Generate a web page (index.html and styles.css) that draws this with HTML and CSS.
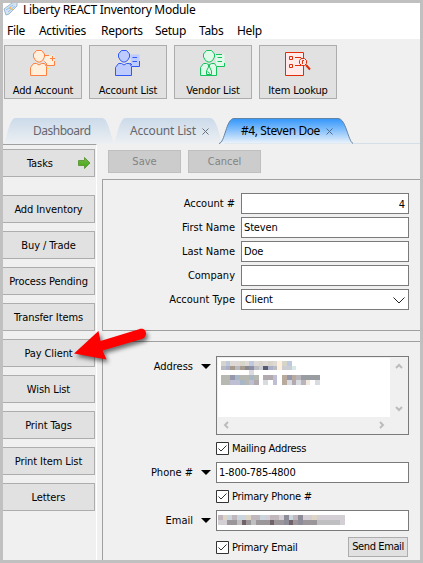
FILE: index.html
```html
<!DOCTYPE html>
<html lang="en">
<head>
<meta charset="utf-8">
<title>Liberty REACT Inventory Module</title>
<link rel="stylesheet" href="styles.css">
</head>
<body>
<div class="window">
  <header class="titlebar">
    <svg class="app-icon" width="15" height="14" viewBox="0 0 15 14"><path d="M1 7L9 1L14 0L14 4L6 12L3 13Z" fill="#d5e4f2" stroke="#9eb6cf"/><path d="M3 8L10 3M5 10L12 4" stroke="#8fbfe8"/><path d="M6 5h2v2h-2zM8 7h2v1h-2z" fill="#f4bd62"/></svg>
    <span class="title">Liberty REACT Inventory Module</span>
  </header>
  <nav class="menu"><span class="m-file">File</span><span class="m-act">Activities</span><span class="m-rep">Reports</span><span class="m-set">Setup</span><span class="m-tabs">Tabs</span><span class="m-help">Help</span></nav>
  <div class="toolbar">
    <button class="tool">
      <svg width="28" height="28" viewBox="0 0 28 28" fill="#fff0dd" stroke="#ff8040"><path d="M1.5 26.5V18.5L4.5 14.5H7.5L10 16L12.5 14.5H15.5L17.5 17.5V26.5Z"/><path d="M7.5 1.5H12.5L15.5 5V8L13.5 11.5L11 13H9L6.5 11.5L4.5 8V5Z"/><path d="M16 6.5H25.5V16.5H17.5V14.5L15.5 12.5" stroke="none"/><path d="M16 6.500H20M25.500 12V16.500H17.500V14.500L15.500 12.500" fill="none"/><path d="M23.500 7V12M21 9.500H26"/><path d="M19 19.5h1" stroke="#ffff30"/></svg>
      <span>Add Account</span>
    </button>
    <button class="tool">
      <svg width="28" height="28" viewBox="0 0 28 28" fill="#becbff" stroke="#3357f5"><path d="M16 5.5H25.5V17.5H17.5" stroke="none"/><path d="M1.5 26.5V18.5L4.5 14.5H7.5L10 16L12.5 14.5H15.5L17.5 17.5V26.5Z"/><path d="M7.5 1.5H12.5L15.5 5V8L13.5 11.5L11 13H9L6.5 11.5L4.5 8V5Z"/><path d="M18 17.5H25.5V12M18.500 8.500H23M18.500 12.500H23M16 14L18 16" fill="none"/></svg>
      <span>Account List</span>
    </button>
    <button class="tool">
      <svg width="28" height="28" viewBox="0 0 28 28" fill="#e0fae9" stroke="#13c45b"><path d="M16 5.500H25.500V17.500H17.500" stroke="none"/><path d="M1.500 26.500V18.500L4.500 14.500H7.500L10 16L12.500 14.500H15.500L17.500 17.500V26.500Z"/><path d="M7.500 1.500H12.500L15.500 5V8L13.500 11.500L11 13H9L6.500 11.500L4.500 8V5Z"/><path d="M18 17.500H25.500V14M17 5.500H23M18.500 8.500H23M18.500 12.500H23M9.500 16V18L7.500 22V25.500H12.500V22L10.500 18V16M8.500 22.500L11 24.500" fill="none"/></svg>
      <span>Vendor List</span>
    </button>
    <button class="tool">
      <svg width="28" height="28" viewBox="0 0 28 28" fill="#ffe9e9" stroke="#df2d09"><path d="M1.500 3.500H19.500V26.500H1.500Z"/><path d="M5.500 7.500h3v3h-3zM5.500 15.500h3v3h-3zM11 8.500h6M11 16.500h6"/><path d="M17 9.500H20.500L22.500 11.500V14.500L20.500 16.500H17.500L15.500 14.500V11.500Z"/><path d="M18.500 15V11.500H20" fill="none"/><path d="M22 16L26 20.500" stroke-width="2"/></svg>
      <span>Item Lookup</span>
    </button>
  </div>
  <div class="tabs">
    <div class="tab dash"><svg class="tab-shape" width="112" height="26" viewBox="0 0 112 26"><defs><linearGradient id="pale" x2="0" y2="1"><stop stop-color="#cbdaea"/><stop offset=".5" stop-color="#dce5ee"/><stop offset="1" stop-color="#edf0f3"/></linearGradient></defs><path d="M0 26C4 24 5 2 12 0H99C106 0 108 22 112 26Z" fill="url(#pale)"/></svg><span class="s-dash">Dashboard</span></div>
    <div class="tab list"><svg class="tab-shape" width="112" height="26" viewBox="0 0 112 26"><path d="M0 26C4 24 5 2 12 0H97C105 0 106 23 112 26Z" fill="url(#pale)"/></svg><span class="s-list">Account List</span><svg class="close" width="7" height="7"><path d="M.5 .5L6.500 6.500M6.500 .5L.5 6.500" stroke="#67717a"/></svg></div>
    <div class="tab active"><svg class="tab-shape" width="136" height="26" viewBox="0 0 136 26"><defs><linearGradient id="blue" x2="0" y2="1"><stop stop-color="#3296fb"/><stop offset=".45" stop-color="#82bffc"/><stop offset="1" stop-color="#edf3fa"/></linearGradient></defs><path d="M0 25.500C6 25 7 .5 15 .5H119C127 .5 129 23 134 25.500" fill="url(#blue)" stroke="#6284a4"/></svg><span class="s-act">#4, Steven Doe</span><svg class="close" width="7" height="7"><path d="M.5 .5L6.500 6.500M6.500 .5L.5 6.500" stroke="#4e6d8c"/></svg></div>
  </div>
  <div class="body">
    <aside class="side">
      <button class="task head"><span>Tasks</span><svg class="go" width="13" height="12" viewBox="0 0 13 12"><defs><linearGradient id="green" x2="0" y2="1"><stop stop-color="#77b84c"/><stop offset="1" stop-color="#3fa80b"/></linearGradient></defs><path d="M.5 3.500H6.500V.5L12 6L6.500 11.500V8.500H.5Z" fill="url(#green)" stroke="#619b3d"/></svg></button>
      <button class="task"><span>Add Inventory</span></button>
      <button class="task"><span>Buy / Trade</span></button>
      <button class="task"><span>Process Pending</span></button>
      <button class="task"><span>Transfer Items</span></button>
      <button class="task"><span>Pay Client</span></button>
      <button class="task"><span>Wish List</span></button>
      <button class="task"><span>Print Tags</span></button>
      <button class="task"><span>Print Item List</span></button>
      <button class="task"><span>Letters</span></button>
    </aside>
    <main class="main">
      <div class="actions"><button class="disabled">Save</button><button class="disabled">Cancel</button></div>
      <section class="group account">
        <label class="row"><span class="label">Account #</span><span class="field number">4</span></label>
        <label class="row"><span class="label">First Name</span><span class="field">Steven</span></label>
        <label class="row"><span class="label">Last Name</span><span class="field">Doe</span></label>
        <label class="row"><span class="label">Company</span><span class="field"></span></label>
        <label class="row"><span class="label">Account Type</span><span class="field select">Client<svg width="12" height="7"><path d="M.5 .5L6 6L11.500 .5" fill="none" stroke="#222"/></svg></span></label>
      </section>
      <section class="group contact">
        <div class="crow top"><span class="label">Address</span><i class="drop"></i>
          <div class="area">
            <div class="redacted"><svg width="100" height="24" viewBox="0 0 100 24" shape-rendering="crispEdges"><g transform="scale(4.700)">
              <path fill="#d7d4ca" d="M0 0h1v1h-1zM4 0h1v1h-1zM8 0h1v1h-1zM10 0h1v1h-1zM13 0h1v1h-1z"/><path fill="#bec8df" d="M1 0h1v1h-1zM6 0h1v1h-1zM14 0h1v1h-1z"/><path fill="#ded9d5" d="M2 0h2v1h-2zM5 0h1v1h-1zM7 0h1v1h-1zM9 0h1v1h-1zM11 0h2v1h-2z"/>
              <path fill="#b9bbc0" d="M0 1h1v1h-1zM3 1h1v1h-1zM7 1h1v1h-1zM11 1h1v1h-1z"/><path fill="#aab0ca" d="M1 1h1v1h-1zM10 1h1v1h-1z"/><path fill="#a69b8e" d="M2 1h1v1h-1zM4 1h1v1h-1z"/><path fill="#858b91" d="M5 1h1v1h-1z"/><path fill="#8d8da9" d="M6 1h1v1h-1z"/><path fill="#585a70" d="M9 1h1v1h-1z"/><path fill="#cccdd3" d="M8 1h1v1h-1zM13 1h2v1h-2z"/><path fill="#fff0dc" d="M12 0h1v2h-1z"/><path fill="#d7e8e9" d="M15 1h1v1h-1z"/><path fill="#dddae0" d="M6 2h1v1h-1z"/>
              <path fill="#b8b8b3" d="M0 3h2v2h-2zM4 3h2v2h-2zM7 3h1v1h-1z"/><path fill="#9696ad" d="M2 3h1v1h-1zM14 3h1v1h-1z"/><path fill="#a8b7c5" d="M3 3h1v1h-1zM4 4h1v1h-1zM6 3h1v1h-1z"/><path fill="#bebfd2" d="M2 4h2v1h-2zM6 4h1v1h-1zM11 3h1v2h-1z"/><path fill="#b2aaaf" d="M7 4h1v1h-1zM9 3h2v1h-2zM15 4h1v1h-1z"/><path fill="#d8dbe0" d="M9 4h1v1h-1zM14 4h1v1h-1zM16 4h1v1h-1zM20 4h1v1h-1z"/><path fill="#baa99d" d="M13 3h1v2h-1zM15 3h1v1h-1z"/><path fill="#999da1" d="M17 3h4v1h-4z"/><path fill="#b8b4bb" d="M16 3h1v1h-1zM17 4h1v1h-1z"/><path fill="#f3e9df" d="M18 4h1v1h-1z"/>
            </g></svg></div>
            <div class="vscroll"><svg width="8" height="6"><path d="M1 5L4 2L7 5" fill="none" stroke="#bcbcbc" stroke-width="2"/></svg><svg width="8" height="6"><path d="M1 1L4 4L7 1" fill="none" stroke="#bcbcbc" stroke-width="2"/></svg></div>
            <div class="hscroll"><svg width="6" height="8"><path d="M5 1L2 4L5 7" fill="none" stroke="#bcbcbc" stroke-width="2"/></svg><svg width="6" height="8"><path d="M1 1L4 4L1 7" fill="none" stroke="#bcbcbc" stroke-width="2"/></svg></div>
          </div>
        </div>
        <div class="check-row mailing"><svg class="check" width="13" height="13"><path d="M.5 .5h12v12h-12z" fill="#fff" stroke="#333"/><path d="M2.500 6.500L5 9L10.500 3.500" fill="none" stroke="#333"/></svg><span class="caption">Mailing Address</span></div>
        <div class="crow"><span class="label">Phone #</span><i class="drop"></i><span class="field phone">1-800-785-4800</span></div>
        <div class="check-row"><svg class="check" width="13" height="13"><path d="M.5 .5h12v12h-12z" fill="#fff" stroke="#333"/><path d="M2.500 6.500L5 9L10.500 3.500" fill="none" stroke="#333"/></svg><span class="caption">Primary Phone #</span></div>
        <div class="crow"><span class="label">Email</span><i class="drop"></i><span class="field email"><svg width="127" height="10" viewBox="0 0 27 2" preserveAspectRatio="none" shape-rendering="crispEdges"><path fill="#d3cfd4" d="M0 0h27v2h-27z"/><path fill="#c1b8bd" d="M0 0h1v1h-1zM3 0h1v1h-1zM7 0h2v1h-2zM11 0h2v1h-2zM16 0h2v1h-2z"/><path fill="#9b9699" d="M2 1h2v1h-2zM6 1h1v1h-1zM8 1h3v1h-3zM12 1h5v1h-5zM18 1h3v1h-3z"/><path fill="#716368" d="M5 1h1v1h-1zM11 1h1v1h-1zM15 1h1v1h-1z"/><path fill="#cbd5dd" d="M2 0h1v1h-1zM4 0h2v1h-2zM9 0h1v1h-1zM15 0h1v1h-1z"/><path fill="#ddd5c5" d="M1 0h1v1h-1zM6 0h1v1h-1zM20 0h1v1h-1z"/><path fill="#8f8c99" d="M14 0h1v2h-1zM17 0h1v2h-1z"/><path fill="#bfbec0" d="M4 1h1v1h-1zM7 1h1v1h-1zM21 1h5v1h-5z"/></svg></span></div>
        <div class="check-row last"><svg class="check" width="13" height="13"><path d="M.5 .5h12v12h-12z" fill="#fff" stroke="#333"/><path d="M2.500 6.500L5 9L10.500 3.500" fill="none" stroke="#333"/></svg><span class="caption">Primary Email</span><button class="send">Send Email</button></div>
      </section>
    </main>
  </div>
  <svg class="pointer" width="90" height="50" viewBox="70 320 90 50"><path d="M74 353.500L98.500 331L100.500 341L139 329.200C143.500 327.500 147 331 145.800 335C145 338 143 338.700 141 339.200L102.500 350.500L106.500 359.500Z" fill="#f00"/></svg>
</div>
</body>
</html>
```

FILE: styles.css
```css
* { box-sizing: border-box; }
body { margin: 0; font: 11px/14px "DejaVu Sans Condensed", "DejaVu Sans", sans-serif; font-stretch: condensed; color: #000; }
button { font: inherit; color: inherit; border-radius: 0; margin: 0; padding: 0; }
span { white-space: nowrap; }
svg { flex: none; display: block; }
.window { width: 423px; height: 563px; border: 3px solid #c0c0c0; background: #f0f0f0; overflow: hidden; position: relative; }
.titlebar { display: flex; height: 17px; background: #fff; font: 12px/15px "Noto Sans", sans-serif; letter-spacing: -.3px; }
.title { margin: -1px 0 0 5px; }
.app-icon { margin-top: -1px; }
.menu { display: flex; height: 19px; padding-left: 4px; background: #fff; font: 12px/21px "Noto Sans", sans-serif; letter-spacing: -.3px; }
.menu span { flex: none; }
.m-file { width: 32px; }
.m-act { width: 62px; }
.m-rep { width: 54px; }
.m-set { width: 44px; }
.m-tabs { width: 38px; }
.toolbar { display: flex; gap: 7px; padding: 6px 1px 0; height: 79px; }
.tool { width: 78px; height: 54px; display: flex; flex-direction: column; align-items: center; border: 1px solid #adadad; background: #e1e1e1; padding-top: 3px; }
.tool span { margin-top: 7px; letter-spacing: -.15px; }
.tabs { display: flex; height: 26px; border-bottom: 1px solid #d5dfe7; font: 12px/26px "Noto Sans", sans-serif; color: #66666d; }
.tab { position: relative; height: 26px; display: flex; align-items: center; flex: none; }
.tab-shape { position: absolute; left: 0; top: 0; }
.tab span, .close { position: relative; }
.dash { width: 110px; padding-left: 30px; }
.list { width: 106px; padding-left: 17px; }
.active { width: 136px; padding-left: 22px; color: #000; }
.s-dash { letter-spacing: -.5px; }
.s-list { letter-spacing: -.2px; }
.s-act { letter-spacing: -.4px; }
.close { margin-left: 6px; }
.body { display: flex; height: 416px; }
.side { width: 94px; border-top: 1px solid #a0a0a0; border-right: 1px solid #fff; padding-top: 4px; display: flex; flex-direction: column; gap: 8px; flex: none; }
.task { width: 92px; height: 28px; flex: none; border: 1px solid #adadad; border-left: 0; background: #e1e1e1; display: flex; justify-content: center; align-items: center; letter-spacing: -.1px; }
.task span { padding-top: 2px; }
.head { margin-bottom: 10px; justify-content: flex-start; padding-left: 24px; }
.go { margin-left: auto; margin-right: 3px; }
.main { flex: 1; padding: 6px 0 0 5px; min-width: 0; }
.actions { display: flex; gap: 7px; padding-left: 6px; height: 29px; }
.disabled { width: 73px; height: 23px; border: 1px solid #bfbfbf; background: #ccc; color: #838383; padding-top: 1px; }
.group { border: 1px solid #a0a0a0; border-right: 0; }
.account { height: 152px; padding: 13px 11px 0 0; display: flex; flex-direction: column; gap: 3px; }
.row { display: flex; justify-content: flex-end; align-items: center; height: 21px; flex: none; }
.label { margin-right: 6px; }
.field { width: 168px; height: 21px; background: #fff; border: 1px solid #7a7a7a; padding: 3px 2px 0; line-height: 13px; letter-spacing: -.15px; }
.number { text-align: right; padding-right: 3px; padding-top: 4px; }
.select { display: flex; justify-content: space-between; padding-left: 3px; padding-right: 3px; }
.select svg { margin-top: 4px; }
.contact { margin-top: 10px; height: 230px; padding: 14px 11px 0 0; }
.crow { display: flex; justify-content: flex-end; align-items: center; height: 21px; }
.crow .field { width: 193px; }
.crow .label { margin-right: 8px; padding-top: 1px; }
.drop { border: 5px solid transparent; border-top-color: #000; border-bottom: 0; margin-right: 5px; }
.top { height: 79px; align-items: flex-start; }
.top .label { margin-top: 3px; }
.top .drop { margin-top: 8px; }
.area { width: 193px; height: 79px; border: 1px solid #7a7a7a; background: #f0f0f0; padding: 1px; display: grid; grid-template-columns: 1fr 17px; grid-template-rows: 1fr 16px; }
.redacted { background: #fff; padding: 3px 0 0 3px; }
.vscroll { display: flex; flex-direction: column; justify-content: space-between; align-items: center; padding: 5px 0; }
.hscroll { display: flex; justify-content: space-between; align-items: center; padding: 0 5px; }
.check-row { display: flex; align-items: center; height: 13px; margin: 7px 0; padding-left: 113px; }
.check { margin-right: 3px; }
.caption { letter-spacing: -.25px; padding-top: 1px; }
.crow .phone { padding-left: 2px; letter-spacing: -.25px; }
.email { padding: 4px 0 0 1px; }
.last { height: 20px; margin: 6px 0 0; }
.send { width: 60px; height: 20px; border: 1px solid #adadad; background: #e1e1e1; margin-left: auto; margin-right: 1px; letter-spacing: -.4px; }
.pointer { position: absolute; left: 67px; top: 317px; filter: drop-shadow(2px 3px 2px rgba(0, 0, 0, .55)); }
```
